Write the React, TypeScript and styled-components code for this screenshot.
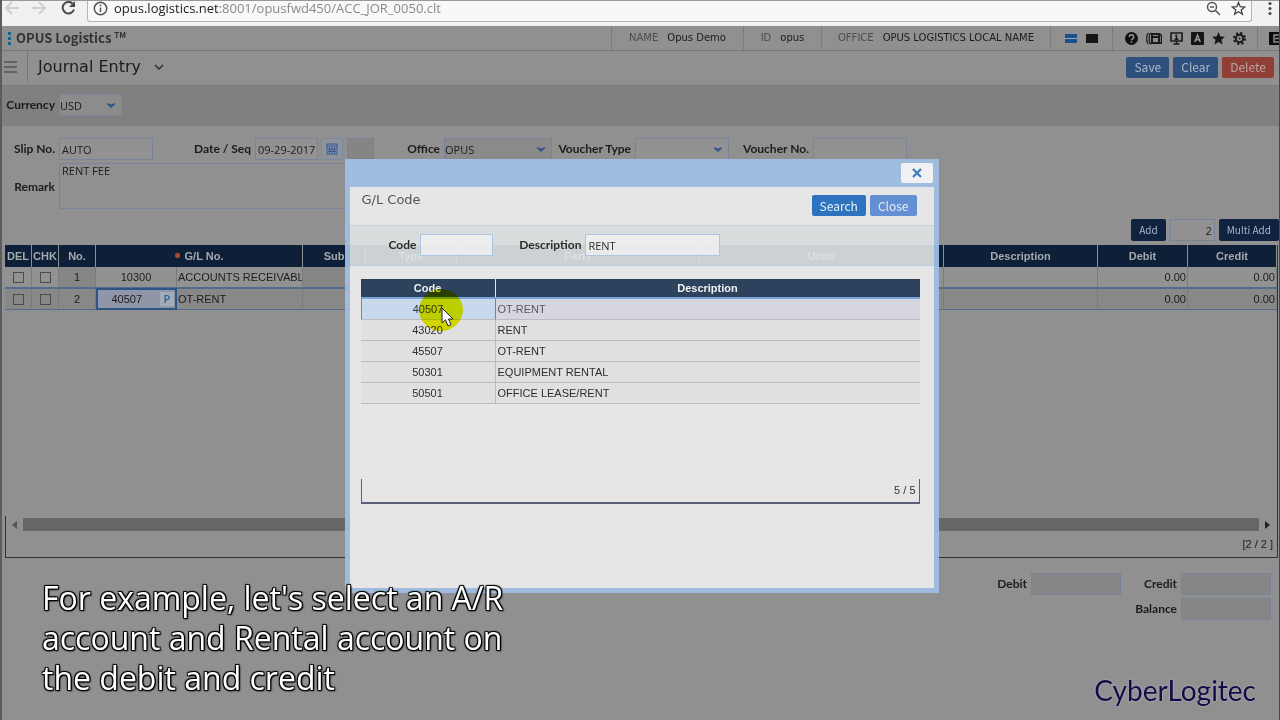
import React from "react";
import styled, { createGlobalStyle } from "styled-components";

const humanist = `"Open Sans", "Noto Sans", sans-serif`;
const labelFont = `Lato, "Noto Sans", sans-serif`;
const buttonFont = `"Noto Sans CJK KR", "Noto Sans", sans-serif`;
const gridFont = `"Liberation Sans", Arial, sans-serif`;

const Global = createGlobalStyle`
  * { box-sizing: border-box; }
  body { margin: 0; background: #909090; font-family: ${humanist}; font-size: 11px; color: #1c1c1c; }
  button, input, select, textarea { font: inherit; color: inherit; }
`;

const Page = styled.div`
  position: relative;
  min-height: 100vh;
  display: flex;
  flex-direction: column;
  overflow: hidden;
  background: #909090;
  border-left: 2px solid #5c5c5c;
  border-right: 1px solid #484848;
  border-bottom: 2px solid #5a5a5a;
`;

/* Browser bar */
const BrowserBar = styled.div`
  display: flex;
  height: 26px;
  padding: 0 5px 4px 0;
  background: #f1f1f1;
  border-top: 1px solid #999;
`;
const NavIcons = styled.div`
  display: flex;
  align-items: flex-start;
  width: 85px;
  padding-left: 2px;
  gap: 12px;
`;
const AddressBox = styled.div`
  flex: 1;
  display: flex;
  align-items: center;
  gap: 6px;
  padding: 0 5px 6px 5px;
  background: #f8f8f8;
  border: solid #b4b4b4;
  border-width: 0 1px 1px;
  border-radius: 0 0 3px 3px;
`;
const Url = styled.span`
  flex: 1;
  font-size: 13px;
  line-height: 16px;
  color: #8a8a8a;
  b { font-weight: 400; color: #222; }
`;
const BarMenu = styled.div`
  width: 22px;
  padding: 0 0 0 16px;
`;

/* Application header */
const AppHeader = styled.header`
  display: flex;
  height: 25px;
  border-bottom: 1px solid #777;
`;
const Brand = styled.div`
  flex: 1;
  display: flex;
  align-items: center;
  gap: 4px;
  padding-left: 6px;
  font: 700 13px/24px ${buttonFont};
  color: #333;
  sup { font: 700 8px/8px ${buttonFont}; }
`;
const HeadCell = styled.div<{ $w: number; $gap?: number; $start?: boolean }>`
  display: flex;
  flex: none;
  align-items: center;
  justify-content: ${(p) => (p.$start ? "flex-start" : "center")};
  gap: ${(p) => p.$gap ?? 9}px;
  width: ${(p) => p.$w}px;
  padding-left: ${(p) => (p.$start ? 10 : 0)}px;
  border-left: 1px solid #7c7c7c;
  font: 10px/24px "DejaVu Sans", sans-serif;
  white-space: nowrap;
  overflow: hidden;
  svg { flex: none; }
`;
const Muted = styled.span`
  color: #4c4c4c;
`;
const Swatch = styled.span<{ $split?: boolean }>`
  width: 12px;
  height: 9px;
  background: ${(p) =>
    p.$split ? "linear-gradient(#1c4f8c 4px, #8fa6c0 4px 5px, #1c4f8c 5px)" : "#161616"};
`;

const TitleBar = styled.div`
  display: flex;
  align-items: center;
  height: 35px;
  padding-bottom: 2px;
  border-bottom: 1px solid #7a7a7a;
`;
const MenuButton = styled.button`
  width: 26px;
  height: 32px;
  padding: 2px 0 0 1px;
  border: 0;
  border-right: 1px solid #777;
  background: none;
  text-align: left;
`;
const Title = styled.h1`
  display: flex;
  flex: 1;
  align-items: center;
  gap: 13px;
  margin: 0;
  padding-left: 10px;
  font: 400 16px/20px "DejaVu Sans", sans-serif;
  color: #1c1c1c;
`;
const Actions = styled.div`
  display: flex;
  gap: 4px;
`;
const PageActions = styled(Actions)`
  padding-right: 5px;
`;
const Button = styled.button<{ $bg: string; $fg?: string; $small?: boolean }>`
  height: ${(p) => (p.$small ? 22 : 21)}px;
  padding: 0 8px;
  border: 0;
  border-radius: 2px;
  background: ${(p) => p.$bg};
  color: ${(p) => p.$fg ?? "#a9b6c8"};
  font: 400 ${(p) => (p.$small ? 10 : 12)}px/20px ${buttonFont};
`;

/* Forms */
const CurrencyStrip = styled.div`
  display: flex;
  align-items: center;
  height: 40px;
  padding: 0 0 2px 2px;
  background: #808080;
`;
const Label = styled.label<{ $w?: number }>`
  flex: none;
  width: ${(p) => (p.$w ? p.$w + "px" : "auto")};
  padding-right: 4px;
  text-align: right;
  white-space: nowrap;
  font: 700 12px/22px ${labelFont};
`;
const Field = styled.input<{ $w: number; $bg?: string; $line?: string; $right?: boolean }>`
  flex: none;
  width: ${(p) => p.$w}px;
  height: 22px;
  padding: 0 2px;
  border: 1px solid ${(p) => p.$line ?? "#78849a"};
  background: ${(p) => p.$bg ?? "#929292"};
  line-height: 20px;
  text-align: ${(p) => (p.$right ? "right" : "left")};
  outline: none;
`;
const SelectWrap = styled.span<{ $w: number }>`
  position: relative;
  flex: none;
  width: ${(p) => p.$w}px;
  height: 22px;
  svg { position: absolute; right: 7px; top: 8px; pointer-events: none; }
`;
const NativeSelect = styled.select<{ $bg?: string }>`
  appearance: none;
  width: 100%;
  height: 22px;
  padding: 0;
  border: 1px solid #78849a;
  border-radius: 0;
  background: ${(p) => p.$bg ?? "#929292"};
  outline: none;
`;
const Form = styled.form`
  padding: 12px 0 0 2px;
`;
const FormRow = styled.div`
  display: flex;
  align-items: flex-start;
  margin-bottom: 3px;
`;
const CalendarButton = styled.button`
  display: grid;
  place-items: center;
  width: 22px;
  height: 22px;
  margin: 0 4px 0 3px;
  padding: 0;
  border: 1px solid #7d8aa2;
  background: #8e939c;
`;
const Remark = styled.textarea`
  flex: 1;
  max-width: 848px;
  height: 46px;
  padding: 0 2px;
  border: 1px solid #78849a;
  background: transparent;
  line-height: 14px;
  resize: none;
`;
const RemarkLabel = styled(Label)`
  padding-top: 13px;
`;

/* Journal grid */
const GridTools = styled.div`
  display: flex;
  justify-content: flex-end;
  gap: 4px;
  height: 33px;
  padding-top: 7px;
`;
const GridBox = styled.div`
  margin: 0 1px 0 3px;
  border-right: 1px solid #333;
`;
const GridScroll = styled.div`
  min-height: 271px;
`;
const Table = styled.table`
  width: 100%;
  table-layout: fixed;
  border-collapse: separate;
  border-spacing: 0;
  font: 11px/14px ${gridFont};
`;
const Th = styled.th`
  height: 22px;
  padding: 0;
  overflow: hidden;
  background: #0e2038;
  border-right: 1px solid #8c8f94;
  color: #a6a9ae;
  font: 700 11px/20px ${gridFont};
  white-space: nowrap;
`;
const Star = styled.span`
  display: inline-block;
  width: 5px;
  height: 5px;
  margin: 0 5px 2px 0;
  border-radius: 2px;
  background: #a84a30;
`;
const Td = styled.td<{ $align?: string; $shade?: boolean }>`
  height: 21px;
  padding: 0 1px;
  overflow: hidden;
  text-align: ${(p) => p.$align ?? "left"};
  white-space: nowrap;
  border-right: 1px solid #777b82;
  border-bottom: 1px solid #526b8f;
  background: ${(p) => (p.$shade ? "#868686" : "#929292")};
  input { display: block; appearance: none; width: 11px; height: 11px; margin: 1px auto 0; border: 1px solid #4a4a4a; }
`;
const Tr = styled.tr<{ $selected?: boolean }>`
  ${Td} {
    ${(p) => p.$selected && "height: 22px; border-top: 1px solid #526b8f; background: #888888;"}
  }
`;
const ActiveTd = styled(Td)`
  && { border: 2px solid #2c5484; background: #8f96a8; }
`;
const CodeCell = styled.span`
  display: flex;
  align-items: center;
  justify-content: flex-end;
  gap: 18px;
`;
const Lookup = styled.button`
  width: 14px;
  height: 14px;
  padding: 0;
  border: 0;
  background: #a3abb8;
  color: #2c6197;
  font: 600 11px/14px ${humanist};
`;
const ScrollRow = styled.div`
  display: flex;
  align-items: center;
  gap: 6px;
  height: 17px;
  padding: 0 7px 0 6px;
  border-left: 1px solid #333;
  svg { flex: none; }
`;
const Thumb = styled.div`
  flex: 1;
  height: 13px;
  background: #666;
`;
const GridFooter = styled.div`
  height: 25px;
  padding-right: 4px;
  border: solid #333;
  border-width: 0 0 1px 1px;
  font: 11px/22px ${gridFont};
  text-align: right;
`;
const Totals = styled.div`
  display: grid;
  grid-template-columns: auto 90px 60px 90px;
  justify-content: end;
  row-gap: 3px;
  padding: 15px 8px 100px 0;
`;
const BalanceLabel = styled(Label)`
  grid-column: 3;
`;

/* Lookup dialog */
const Overlay = styled.div`
  position: absolute;
  inset: 0;
  display: flex;
  justify-content: center;
  align-items: flex-start;
  padding: 159px 0 0 2px;
`;
const Dialog = styled.section`
  position: relative;
  width: 594px;
  border: solid rgba(160, 191, 227, 0.95);
  border-width: 0 5px 5px;
`;
const DialogBar = styled.div`
  display: flex;
  justify-content: flex-end;
  height: 28px;
  padding: 4px 1px 4px 0;
  background: #9fbde1;
`;
const CloseX = styled.button`
  display: grid;
  place-items: center;
  width: 32px;
  height: 20px;
  padding: 0;
  border: 0;
  border-radius: 2px;
  background: #f0f1f2;
`;
const DialogHead = styled.div`
  display: flex;
  justify-content: space-between;
  height: 38px;
  padding: 8px 17px 0 12px;
  background: rgba(232, 232, 232, 0.98);
`;
const DialogTitle = styled.h2`
  margin: 0;
  font: 400 13px/10px "DejaVu Sans", sans-serif;
  color: #555;
`;
const DialogFilter = styled.form`
  display: flex;
  height: 41px;
  padding: 8px 0 0 39px;
  background: rgba(225, 230, 230, 0.9);
  border-top: 1px solid #ccd3d6;
  border-bottom: 1px solid #c0cede;
  color: #2c2c2c;
`;
const DialogBody = styled.div`
  height: 322px;
  padding: 13px 14px 0 11px;
  background: rgba(232, 232, 232, 0.98);
`;
const ResultArea = styled.div`
  height: 200px;
`;
const ResultTh = styled.th`
  height: 18px;
  padding: 0;
  background: #2d435d;
  border-right: 1px solid #e4e4e4;
  color: #f0f0f0;
  font: 700 11px/18px ${gridFont};
  &:last-child { border-right: 0; }
`;
const ResultTd = styled.td<{ $center?: boolean }>`
  height: 21px;
  padding: 0 2px;
  border-right: 1px solid #bbb;
  border-bottom: 1px solid #bdbdbd;
  background: #e0e0e0;
  color: #2e2e2e;
  text-align: ${(p) => (p.$center ? "center" : "left")};
  &:last-child { border-right: 0; }
`;
const ResultTr = styled.tr<{ $selected?: boolean }>`
  ${ResultTd} {
    ${(p) => p.$selected && "height: 23px; background: #d6d6e1; color: #5c5966; border-top: 2px solid #79a5dc;"}
  }
  ${ResultTd}:first-child {
    ${(p) => p.$selected && "background: #c8d9ed; color: #333; border-left: 1px solid #4a8dd4; border-right-color: #4a8dd4;"}
  }
`;
const ResultFooter = styled.div`
  height: 25px;
  padding-right: 3px;
  border: solid #5a5e76;
  border-width: 0 1px 2px;
  font: 11px/22px ${gridFont};
  text-align: right;
  color: #333;
`;
const Highlight = styled.span`
  position: absolute;
  left: 69px;
  top: 130px;
  width: 44px;
  height: 42px;
  border-radius: 50%;
  background: #f0f200;
  mix-blend-mode: multiply;
`;
const Pointer = styled.svg`
  position: absolute;
  left: 91px;
  top: 148px;
`;

const Caption = styled.p`
  position: absolute;
  left: 40px;
  bottom: 22px;
  width: 490px;
  margin: 0;
  font: 400 32px/40px ${humanist};
  color: #fff;
  white-space: pre-line;
  text-shadow: 1px 1px 1px #000, -1px -1px 1px #000, 1px -1px 1px #000, -1px 1px 1px #000, 1px 1px 2px #000;
`;
const Company = styled.div`
  position: absolute;
  right: 23px;
  bottom: 14px;
  font: 400 28px/32px Lato, sans-serif;
  color: #110c45;
  text-shadow: 0 0 2px #c4c4d4;
`;

const Chevron = () => (
  <svg width="8" height="6" viewBox="0 0 8 6">
    <path d="M0 1l4 1.500L8 1v1.500L4 6 0 2.500z" fill="#34568c" />
  </svg>
);

type SelectProps = { id: string; value?: string; width: number; bg?: string };
const Select = ({ id, value = "", width, bg }: SelectProps) => (
  <SelectWrap $w={width}>
    <NativeSelect id={id} defaultValue={value} $bg={bg}>
      <option>{value}</option>
    </NativeSelect>
    <Chevron />
  </SelectWrap>
);

const results = [
  ["40507", "OT-RENT"],
  ["43020", "RENT"],
  ["45507", "OT-RENT"],
  ["50301", "EQUIPMENT RENTAL"],
  ["50501", "OFFICE LEASE/RENT"],
];

const Browser = () => (
  <BrowserBar>
    <NavIcons>
      <svg width="16" height="14" viewBox="0 0 16 14" fill="none" stroke="#cfcfcf" strokeWidth="2">
        <path d="M15 7H3M8 1L2 7l6 6" />
      </svg>
      <svg width="16" height="14" viewBox="0 0 16 14" fill="none" stroke="#cfcfcf" strokeWidth="2">
        <path d="M0 7h12M7 1l6 6-6 6" />
      </svg>
      <svg width="16" height="14" viewBox="0 0 16 14" fill="none" stroke="#4a4a4a" strokeWidth="2">
        <path d="M12.500 2.500A5.800 5.800 0 1 0 14 8.500" />
        <path d="M15 0v6H9z" fill="#4a4a4a" stroke="none" />
      </svg>
    </NavIcons>
    <AddressBox>
      <svg width="15" height="15" viewBox="0 0 15 15" fill="none" stroke="#555" strokeWidth="1.500">
        <circle cx="7.500" cy="7.500" r="6.200" />
        <path d="M7.500 6.500v4.500M7.500 3.500v1.700" />
      </svg>
      <Url><b>opus.logistics.net</b>:8001/opusfwd450/ACC_JOR_0050.clt</Url>
      <svg width="15" height="15" viewBox="0 0 15 15" fill="none" stroke="#555" strokeWidth="1.500">
        <circle cx="6" cy="6" r="4.500" />
        <path d="M9.500 9.500l4.500 4.500M4 6h4" />
      </svg>
      <svg width="19" height="15" viewBox="-4 0 19 15" fill="none" stroke="#444" strokeWidth="1.300">
        <path d="M7.500 1.500l1.700 4.200 4.500.3-3.500 2.900 1.200 4.400-3.900-2.500-3.900 2.500 1.200-4.400L1.300 6l4.500-.3z" />
      </svg>
    </AddressBox>
    <BarMenu>
      <svg width="4" height="15" viewBox="0 0 4 15" fill="#444">
        <circle cx="2" cy="2.500" r="1.500" />
        <circle cx="2" cy="7.500" r="1.500" />
        <circle cx="2" cy="12.500" r="1.500" />
      </svg>
    </BarMenu>
  </BrowserBar>
);

const ToolIcons = () => (
  <>
    <svg width="13" height="13" viewBox="0 0 13 13">
      <circle cx="6.500" cy="6.500" r="6.500" fill="#111" />
      <path d="M4.300 5a2.200 2.200 0 1 1 3.300 1.800c-.8.500-1.100.8-1.100 1.500M6.500 9.200v1.600" fill="none" stroke="#999" strokeWidth="1.500" />
    </svg>
    <svg width="16" height="13" viewBox="0 0 16 13">
      <path d="M2.500 1C1 2 .7 4 .7 6.500S1 11 2.500 12M5 .8C3.300 2 3.200 4 3.200 6.500S3.300 11 5 12.200" fill="none" stroke="#1a1a1a" strokeWidth="1.200" />
      <path d="M5 1h9l2 2v9H5z" fill="#1a1a1a" />
      <path d="M7 3h5v1H7zM7 6h5v4H7zM14 3.500h.8v7H14z" fill="#8c8c8c" />
    </svg>
    <svg width="13" height="13" viewBox="0 0 13 13">
      <path d="M1 1h11v8H1z" fill="none" stroke="#1a1a1a" strokeWidth="1.600" />
      <path d="M5.200 3.500h1.300V7M4.500 7.200h4M3.500 12h6M6.500 9v3" fill="none" stroke="#1a1a1a" strokeWidth="1.500" />
    </svg>
    <svg width="13" height="13" viewBox="0 0 13 13">
      <rect width="13" height="13" rx="1" fill="#151515" />
      <path d="M3.800 10L6.500 3l2.700 7M4.800 7.800h3.500" fill="none" stroke="#999" strokeWidth="1.400" />
    </svg>
    <svg width="13" height="13" viewBox="0 0 13 13">
      <path d="M6.500 0l1.800 4.500 4.700.3-3.600 3 1.200 4.700-4.100-2.600-4.100 2.600 1.200-4.700L0 4.800l4.700-.3z" fill="#151515" />
    </svg>
    <svg width="13" height="13" viewBox="0 0 13 13" fill="none" stroke="#1a1a1a">
      <circle cx="6.500" cy="6.500" r="5.500" strokeWidth="2" strokeDasharray="2.300 2.020" />
      <circle cx="6.500" cy="6.500" r="3.700" strokeWidth="2" />
      <circle cx="6.500" cy="6.500" r="1" fill="#1a1a1a" stroke="none" />
    </svg>
  </>
);

const LookupDialog = () => (
  <Overlay>
    <Dialog role="dialog" aria-labelledby="dlg-title">
      <DialogBar>
        <CloseX aria-label="Close dialog">
          <svg width="10" height="10" viewBox="0 0 10 10" stroke="#3c7dc4" strokeWidth="2.200">
            <path d="M1 1l8 8M9 1L1 9" />
          </svg>
        </CloseX>
      </DialogBar>
      <DialogHead>
        <DialogTitle id="dlg-title">G/L Code</DialogTitle>
        <Actions>
          <Button $bg="#2d73bf" $fg="#e8eef6">Search</Button>
          <Button $bg="#648fd2" $fg="#e4ebf6">Close</Button>
        </Actions>
      </DialogHead>
      <DialogFilter>
        <Label htmlFor="code">Code</Label>
        <Field id="code" $w={73} $bg="rgba(240,241,241,.8)" $line="#a9c6e4" />
        <Label htmlFor="desc" $w={92}>Description</Label>
        <Field id="desc" defaultValue="RENT" $w={135} $bg="rgba(240,241,241,.8)" $line="#a9c6e4" />
      </DialogFilter>
      <DialogBody>
        <ResultArea>
          <Table>
            <colgroup>
              <col style={{ width: 135 }} />
              <col />
            </colgroup>
            <thead>
              <tr>
                <ResultTh>Code</ResultTh>
                <ResultTh>Description</ResultTh>
              </tr>
            </thead>
            <tbody>
              {results.map(([code, desc], i) => (
                <ResultTr key={code} $selected={i === 0}>
                  <ResultTd $center>{code}</ResultTd>
                  <ResultTd>{desc}</ResultTd>
                </ResultTr>
              ))}
            </tbody>
          </Table>
        </ResultArea>
        <ResultFooter>5 / 5</ResultFooter>
      </DialogBody>
      <Highlight />
      <Pointer width="14" height="20" viewBox="0 0 14 20">
        <path d="M1 1v15l3.500-3.200L7 19l3-1.300L7.500 12H12z" fill="#fff" stroke="#222" />
      </Pointer>
    </Dialog>
  </Overlay>
);

const columns = [27, 27, 37, 81, 126, 63, 91, 243, 0, 154, 90, 89];

const JournalGrid = () => (
  <GridBox>
    <GridScroll>
      <Table>
        <colgroup>
          {columns.map((w, i) => (
            <col key={i} style={w ? { width: w } : undefined} />
          ))}
        </colgroup>
        <thead>
          <tr>
            <Th>DEL</Th>
            <Th>CHK</Th>
            <Th>No.</Th>
            <Th colSpan={2}><Star />G/L No.</Th>
            <Th>Sub</Th>
            <Th>Type</Th>
            <Th>Party</Th>
            <Th>Units</Th>
            <Th>Description</Th>
            <Th>Debit</Th>
            <Th>Credit</Th>
          </tr>
        </thead>
        <tbody>
          <Tr>
            <Td><input type="checkbox" aria-label="Delete row 1" /></Td>
            <Td><input type="checkbox" aria-label="Check row 1" /></Td>
            <Td $align="center" $shade>1</Td>
            <Td $align="center">10300</Td>
            <Td>ACCOUNTS RECEIVABL</Td>
            <Td $shade />
            <Td />
            <Td />
            <Td />
            <Td />
            <Td $align="right">0.00</Td>
            <Td $align="right">0.00</Td>
          </Tr>
          <Tr $selected>
            <Td><input type="checkbox" aria-label="Delete row 2" /></Td>
            <Td><input type="checkbox" aria-label="Check row 2" /></Td>
            <Td $align="center">2</Td>
            <ActiveTd>
              <CodeCell>40507<Lookup aria-label="Look up code">P</Lookup></CodeCell>
            </ActiveTd>
            <Td>OT-RENT</Td>
            <Td />
            <Td />
            <Td />
            <Td />
            <Td />
            <Td $align="right">0.00</Td>
            <Td $align="right">0.00</Td>
          </Tr>
        </tbody>
      </Table>
    </GridScroll>
    <ScrollRow>
      <svg width="5" height="8" viewBox="0 0 5 8"><path d="M5 0v8L0 4z" fill="#555" /></svg>
      <Thumb />
      <svg width="5" height="8" viewBox="0 0 5 8"><path d="M0 0v8l5-4z" fill="#222" /></svg>
    </ScrollRow>
    <GridFooter>[2 / 2 ]</GridFooter>
  </GridBox>
);

export default function App() {
  return (
    <Page>
      <Global />
      <Browser />
      <AppHeader>
        <Brand>
          <svg width="4" height="13" viewBox="0 0 4 13" fill="#14688f">
            <path d="M0 0h3v3H0zM0 5h3v3H0zM0 10h3v3H0z" />
          </svg>
          <span>OPUS Logistics <sup>TM</sup></span>
        </Brand>
        <HeadCell $w={132}><Muted>NAME</Muted>Opus Demo</HeadCell>
        <HeadCell $w={78}><Muted>ID</Muted>opus</HeadCell>
        <HeadCell $w={229}><Muted>OFFICE</Muted>OPUS LOGISTICS LOCAL NAME</HeadCell>
        <HeadCell $w={62}><Swatch $split /><Swatch /></HeadCell>
        <HeadCell $w={145} $gap={8}><ToolIcons /></HeadCell>
        <HeadCell $w={22} $start>
          <svg width="14" height="13" viewBox="0 0 14 13">
            <path d="M1 0h13v13H1z" fill="#0c0c0c" />
            <path d="M12 3H6v7h6M7 6.500h7" fill="none" stroke="#8c8c8c" strokeWidth="1.500" />
          </svg>
        </HeadCell>
      </AppHeader>
      <TitleBar>
        <MenuButton aria-label="Menu">
          <svg width="16" height="14" viewBox="0 0 16 14" stroke="#626262" strokeWidth="2">
            <path d="M1 2h13M1 7h13M1 12h13" />
          </svg>
        </MenuButton>
        <Title>
          Journal Entry
          <svg width="10" height="6" viewBox="0 0 10 6" fill="none" stroke="#333" strokeWidth="1.600">
            <path d="M1 1l4 4 4-4" />
          </svg>
        </Title>
        <PageActions>
          <Button $bg="#2f4f7d">Save</Button>
          <Button $bg="#2f4f7d">Clear</Button>
          <Button $bg="#8f3f36" $fg="#bca29e">Delete</Button>
        </PageActions>
      </TitleBar>
      <CurrencyStrip>
        <Label htmlFor="currency" $w={55}>Currency</Label>
        <Select id="currency" value="USD" width={63} bg="#8c8c8c" />
      </CurrencyStrip>
      <Form>
        <FormRow>
          <Label htmlFor="slip" $w={55}>Slip No.</Label>
          <Field id="slip" defaultValue="AUTO" $w={94} />
          <Label htmlFor="date" $w={102}>Date / Seq</Label>
          <Field id="date" defaultValue="09-29-2017" $w={63} />
          <CalendarButton type="button" aria-label="Pick a date">
            <svg width="12" height="12" viewBox="0 0 12 12">
              <rect x="1" y="1" width="10" height="10" fill="#8795ae" stroke="#34598f" />
              <path d="M1 3h10M3.500 4v6M6 4v6M8.500 4v6M2 6h8M2 8.500h8" stroke="#34598f" />
              <path d="M5 5.500h3v2H5z" fill="#8d5568" />
            </svg>
          </CalendarButton>
          <Field aria-label="Sequence" $w={27} $bg="#858585" />
          <Label htmlFor="office" $w={70}>Office</Label>
          <Select id="office" value="OPUS" width={108} bg="#8a8a8a" />
          <Label htmlFor="vtype" $w={83}>Voucher Type</Label>
          <Select id="vtype" width={94} />
          <Label htmlFor="vno" $w={84}>Voucher No.</Label>
          <Field id="vno" $w={94} />
        </FormRow>
        <FormRow>
          <RemarkLabel htmlFor="remark" $w={55}>Remark</RemarkLabel>
          <Remark id="remark" defaultValue="RENT FEE" />
        </FormRow>
      </Form>
      <GridTools>
        <Button $bg="#0f2340" $small>Add</Button>
        <Field aria-label="Rows to add" defaultValue="2" $w={45} $right />
        <Button $bg="#0f2340" $small>Multi Add</Button>
      </GridTools>
      <JournalGrid />
      <Totals>
        <Label htmlFor="debit">Debit</Label>
        <Field id="debit" $w={90} $bg="#868686" />
        <Label htmlFor="credit">Credit</Label>
        <Field id="credit" $w={90} $bg="#868686" />
        <BalanceLabel htmlFor="balance">Balance</BalanceLabel>
        <Field id="balance" $w={90} $bg="#868686" />
      </Totals>
      <LookupDialog />
      <Caption>{"For example, let's select an A/R\naccount and Rental account on\nthe debit and credit"}</Caption>
      <Company>CyberLogitec</Company>
    </Page>
  );
}
